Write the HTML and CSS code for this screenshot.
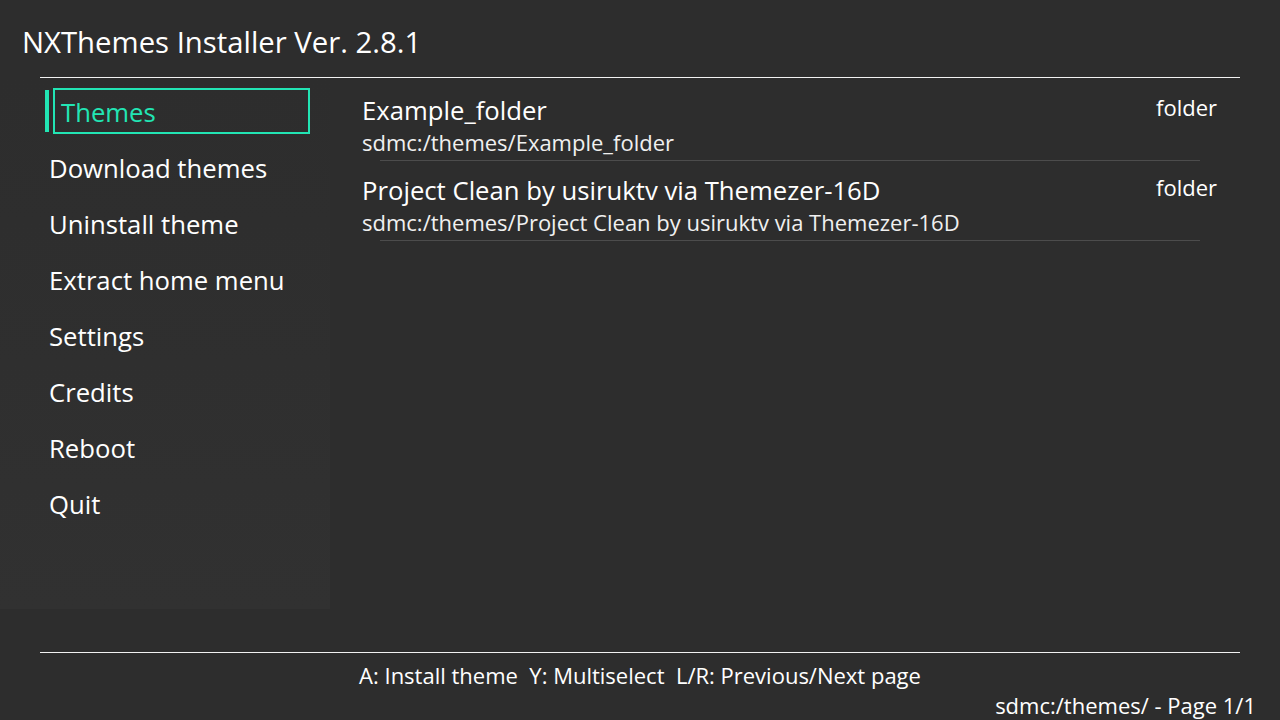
FILE: index.html
```html
<!DOCTYPE html>
<html>
<head>
<meta charset="utf-8">
<link rel="stylesheet" href="styles.css">
</head>
<body>
<div class="screen">
  <header class="header">
    <h1 class="title">NXThemes Installer Ver. 2.8.1</h1>
  </header>
  <div class="rule"></div>
  <main class="main">
    <nav class="sidebar">
      <div class="item selected"><span class="bar"></span><span class="box">Themes</span></div>
      <div class="item">Download themes</div>
      <div class="item">Uninstall theme</div>
      <div class="item">Extract home menu</div>
      <div class="item">Settings</div>
      <div class="item">Credits</div>
      <div class="item">Reboot</div>
      <div class="item">Quit</div>
    </nav>
    <section class="content">
      <div class="row">
        <div class="row-head"><span class="name">Example_folder</span><span class="type">folder</span></div>
        <div class="path">sdmc:/themes/Example_folder</div>
        <div class="sep"></div>
      </div>
      <div class="row">
        <div class="row-head"><span class="name">Project Clean by usiruktv via Themezer-16D</span><span class="type">folder</span></div>
        <div class="path">sdmc:/themes/Project Clean by usiruktv via Themezer-16D</div>
        <div class="sep"></div>
      </div>
    </section>
  </main>
  <div class="rule"></div>
  <footer class="footer">
    <div class="hints">A: Install theme&nbsp;&nbsp;Y: Multiselect&nbsp;&nbsp;L/R: Previous/Next page</div>
    <div class="status">sdmc:/themes/ - Page 1/1</div>
  </footer>
</div>
</body>
</html>
```
FILE: styles.css
```css
* { box-sizing: border-box; margin: 0; padding: 0; }
html, body { width: 1280px; height: 720px; overflow: hidden; }
body {
  background: #2d2d2d;
  color: #ffffff;
  font-family: "Open Sans", "Noto Sans", sans-serif;
}
.screen { display: flex; flex-direction: column; width: 1280px; height: 720px; }
.header { height: 77px; padding-left: 22px; padding-top: 22px; }
.title { font-size: 29.3px; font-weight: 400; line-height: 40px; }
.rule { height: 1px; background: #f2f2f2; margin: 0 40px; flex: none; }
.main { display: flex; height: 574px; flex: none; }
.sidebar {
  width: 330px;
  padding: 10px 0 0 45px;
  display: flex;
  flex-direction: column;
  gap: 10px;
  background: linear-gradient(to bottom, #2d2d2d 0%, #2f2f2f 50%, #313131 92.5%, #2d2d2d 92.6%);
}
.item {
  height: 46px;
  font-size: 25.7px;
  line-height: 42px;
  padding: 4px 0 0 4px;
  color: #ffffff;
  display: flex;
  align-items: flex-start;
}
.item.selected { padding: 0; color: #22e5b4; gap: 4px; align-items: center; }
.bar { width: 4px; height: 42px; background: #22e5b4; flex: none; }
.box {
  width: 257px;
  height: 46px;
  border: 2px solid #22e5b4;
  padding: 2px 0 0 6px;
  line-height: 42px;
}
.content { flex: 1; padding-top: 3px; padding-right: 40px; }
.row { padding: 14px 23px 0 32px; display: flex; flex-direction: column; }
.row-head { display: flex; justify-content: space-between; align-items: flex-start; }
.name { font-size: 25.7px; line-height: 32px; }
.type { font-size: 22px; line-height: 24px; }
.path { font-size: 22px; line-height: 30px; color: #f0f0f0; }
.sep { height: 1px; background: #4c4c4c; margin: 3px 17px 0 18px; }
.footer { flex: 1; display: flex; flex-direction: column; font-size: 22px; }
.hints { text-align: center; line-height: 26px; padding-top: 9px; }
.status { text-align: right; padding-right: 24px; line-height: 26px; padding-top: 4px; }
```
